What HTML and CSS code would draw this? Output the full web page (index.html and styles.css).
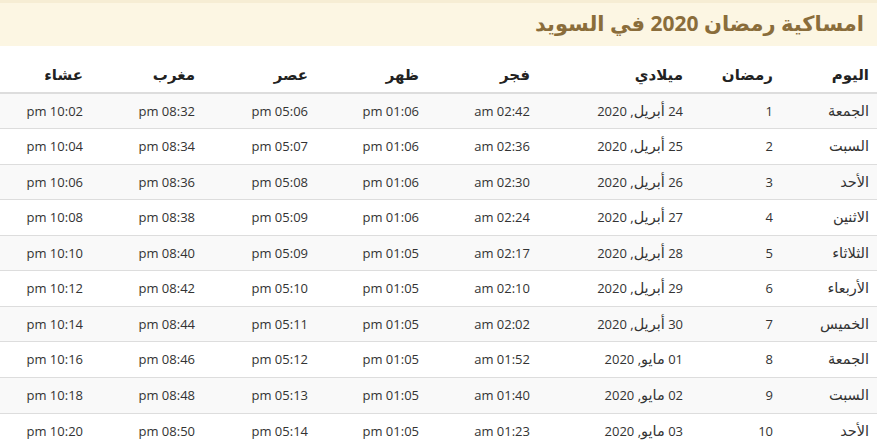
FILE: index.html
```html
<!DOCTYPE html>
<html lang="ar" dir="rtl">
<head>
<meta charset="utf-8">
<title>امساكية رمضان 2020 في السويد</title>
<link rel="stylesheet" href="styles.css">
</head>
<body>
<div class="page">
  <h1 class="title">امساكية رمضان 2020 في السويد</h1>
  <table class="imsakia">
    <colgroup>
      <col class="c-day"><col class="c-ram"><col class="c-greg"><col class="c-t1"><col class="c-t2"><col class="c-t3"><col class="c-t4"><col class="c-t5">
    </colgroup>
    <thead>
      <tr><th>اليوم</th><th>رمضان</th><th>ميلادي</th><th>فجر</th><th>ظهر</th><th>عصر</th><th>مغرب</th><th>عشاء</th></tr>
    </thead>
    <tbody>
      <tr><td><span class="ar">الجمعة</span></td><td>1</td><td>24 <span class="ar">أبريل</span>, 2020</td><td>am 02:42</td><td>pm 01:06</td><td>pm 05:06</td><td>pm 08:32</td><td>pm 10:02</td></tr>
      <tr><td><span class="ar">السبت</span></td><td>2</td><td>25 <span class="ar">أبريل</span>, 2020</td><td>am 02:36</td><td>pm 01:06</td><td>pm 05:07</td><td>pm 08:34</td><td>pm 10:04</td></tr>
      <tr><td><span class="ar">الأحد</span></td><td>3</td><td>26 <span class="ar">أبريل</span>, 2020</td><td>am 02:30</td><td>pm 01:06</td><td>pm 05:08</td><td>pm 08:36</td><td>pm 10:06</td></tr>
      <tr><td><span class="ar">الاثنين</span></td><td>4</td><td>27 <span class="ar">أبريل</span>, 2020</td><td>am 02:24</td><td>pm 01:06</td><td>pm 05:09</td><td>pm 08:38</td><td>pm 10:08</td></tr>
      <tr><td><span class="ar">الثلاثاء</span></td><td>5</td><td>28 <span class="ar">أبريل</span>, 2020</td><td>am 02:17</td><td>pm 01:05</td><td>pm 05:09</td><td>pm 08:40</td><td>pm 10:10</td></tr>
      <tr><td><span class="ar">الأربعاء</span></td><td>6</td><td>29 <span class="ar">أبريل</span>, 2020</td><td>am 02:10</td><td>pm 01:05</td><td>pm 05:10</td><td>pm 08:42</td><td>pm 10:12</td></tr>
      <tr><td><span class="ar">الخميس</span></td><td>7</td><td>30 <span class="ar">أبريل</span>, 2020</td><td>am 02:02</td><td>pm 01:05</td><td>pm 05:11</td><td>pm 08:44</td><td>pm 10:14</td></tr>
      <tr><td><span class="ar">الجمعة</span></td><td>8</td><td>01 <span class="ar">مايو</span>, 2020</td><td>am 01:52</td><td>pm 01:05</td><td>pm 05:12</td><td>pm 08:46</td><td>pm 10:16</td></tr>
      <tr><td><span class="ar">السبت</span></td><td>9</td><td>02 <span class="ar">مايو</span>, 2020</td><td>am 01:40</td><td>pm 01:05</td><td>pm 05:13</td><td>pm 08:48</td><td>pm 10:18</td></tr>
      <tr><td><span class="ar">الأحد</span></td><td>10</td><td>03 <span class="ar">مايو</span>, 2020</td><td>am 01:23</td><td>pm 01:05</td><td>pm 05:14</td><td>pm 08:50</td><td>pm 10:20</td></tr>
    </tbody>
  </table>
</div>
</body>
</html>
```
FILE: styles.css
```css
* { box-sizing: border-box; }
html, body { margin: 0; padding: 0; background: #fff; }
body {
  font-family: "Open Sans", "DejaVu Sans", sans-serif;
  font-size: 13px;
  line-height: 1.42857;
  color: #333;
  overflow: hidden;
}
.page { width: 877px; }
.title {
  margin: 0 0 10px 0;
  height: 46px;
  padding: 0 13px;
  background: #fcf6e3;
  border-top: 3px solid #f6edd4;
  color: #8a6d3b;
  font-family: "Open Sans", "DejaVu Sans", sans-serif;
  font-size: 21px;
  font-weight: bold;
  line-height: 41px;
}
.imsakia {
  width: 877px;
  border-collapse: collapse;
  table-layout: fixed;
}
.c-day { width: 96px; }
.c-ram { width: 90px; }
.c-greg { width: 153px; }
.c-t1 { width: 111px; }
.c-t2 { width: 111px; }
.c-t3 { width: 113px; }
.c-t4 { width: 112px; }
.c-t5 { width: 91px; }
.imsakia th, .imsakia td {
  padding: 8px;
  text-align: right;
  white-space: nowrap;
}
.imsakia th {
  color: #222;
  font-size: 15px;
  line-height: 18px;
  padding-top: 9px;
  padding-bottom: 8.5px;
  font-weight: bold;
  vertical-align: bottom;
  border-bottom: 2px solid #ddd;
}
.imsakia td {
  border-top: 1px solid #ddd;
  vertical-align: top;
}
.ar {
  font-family: "DejaVu Sans", sans-serif;
  font-size: 14.5px;
  line-height: 1;
}
.imsakia tbody tr:nth-child(odd) { background: #f9f9f9; }
```
